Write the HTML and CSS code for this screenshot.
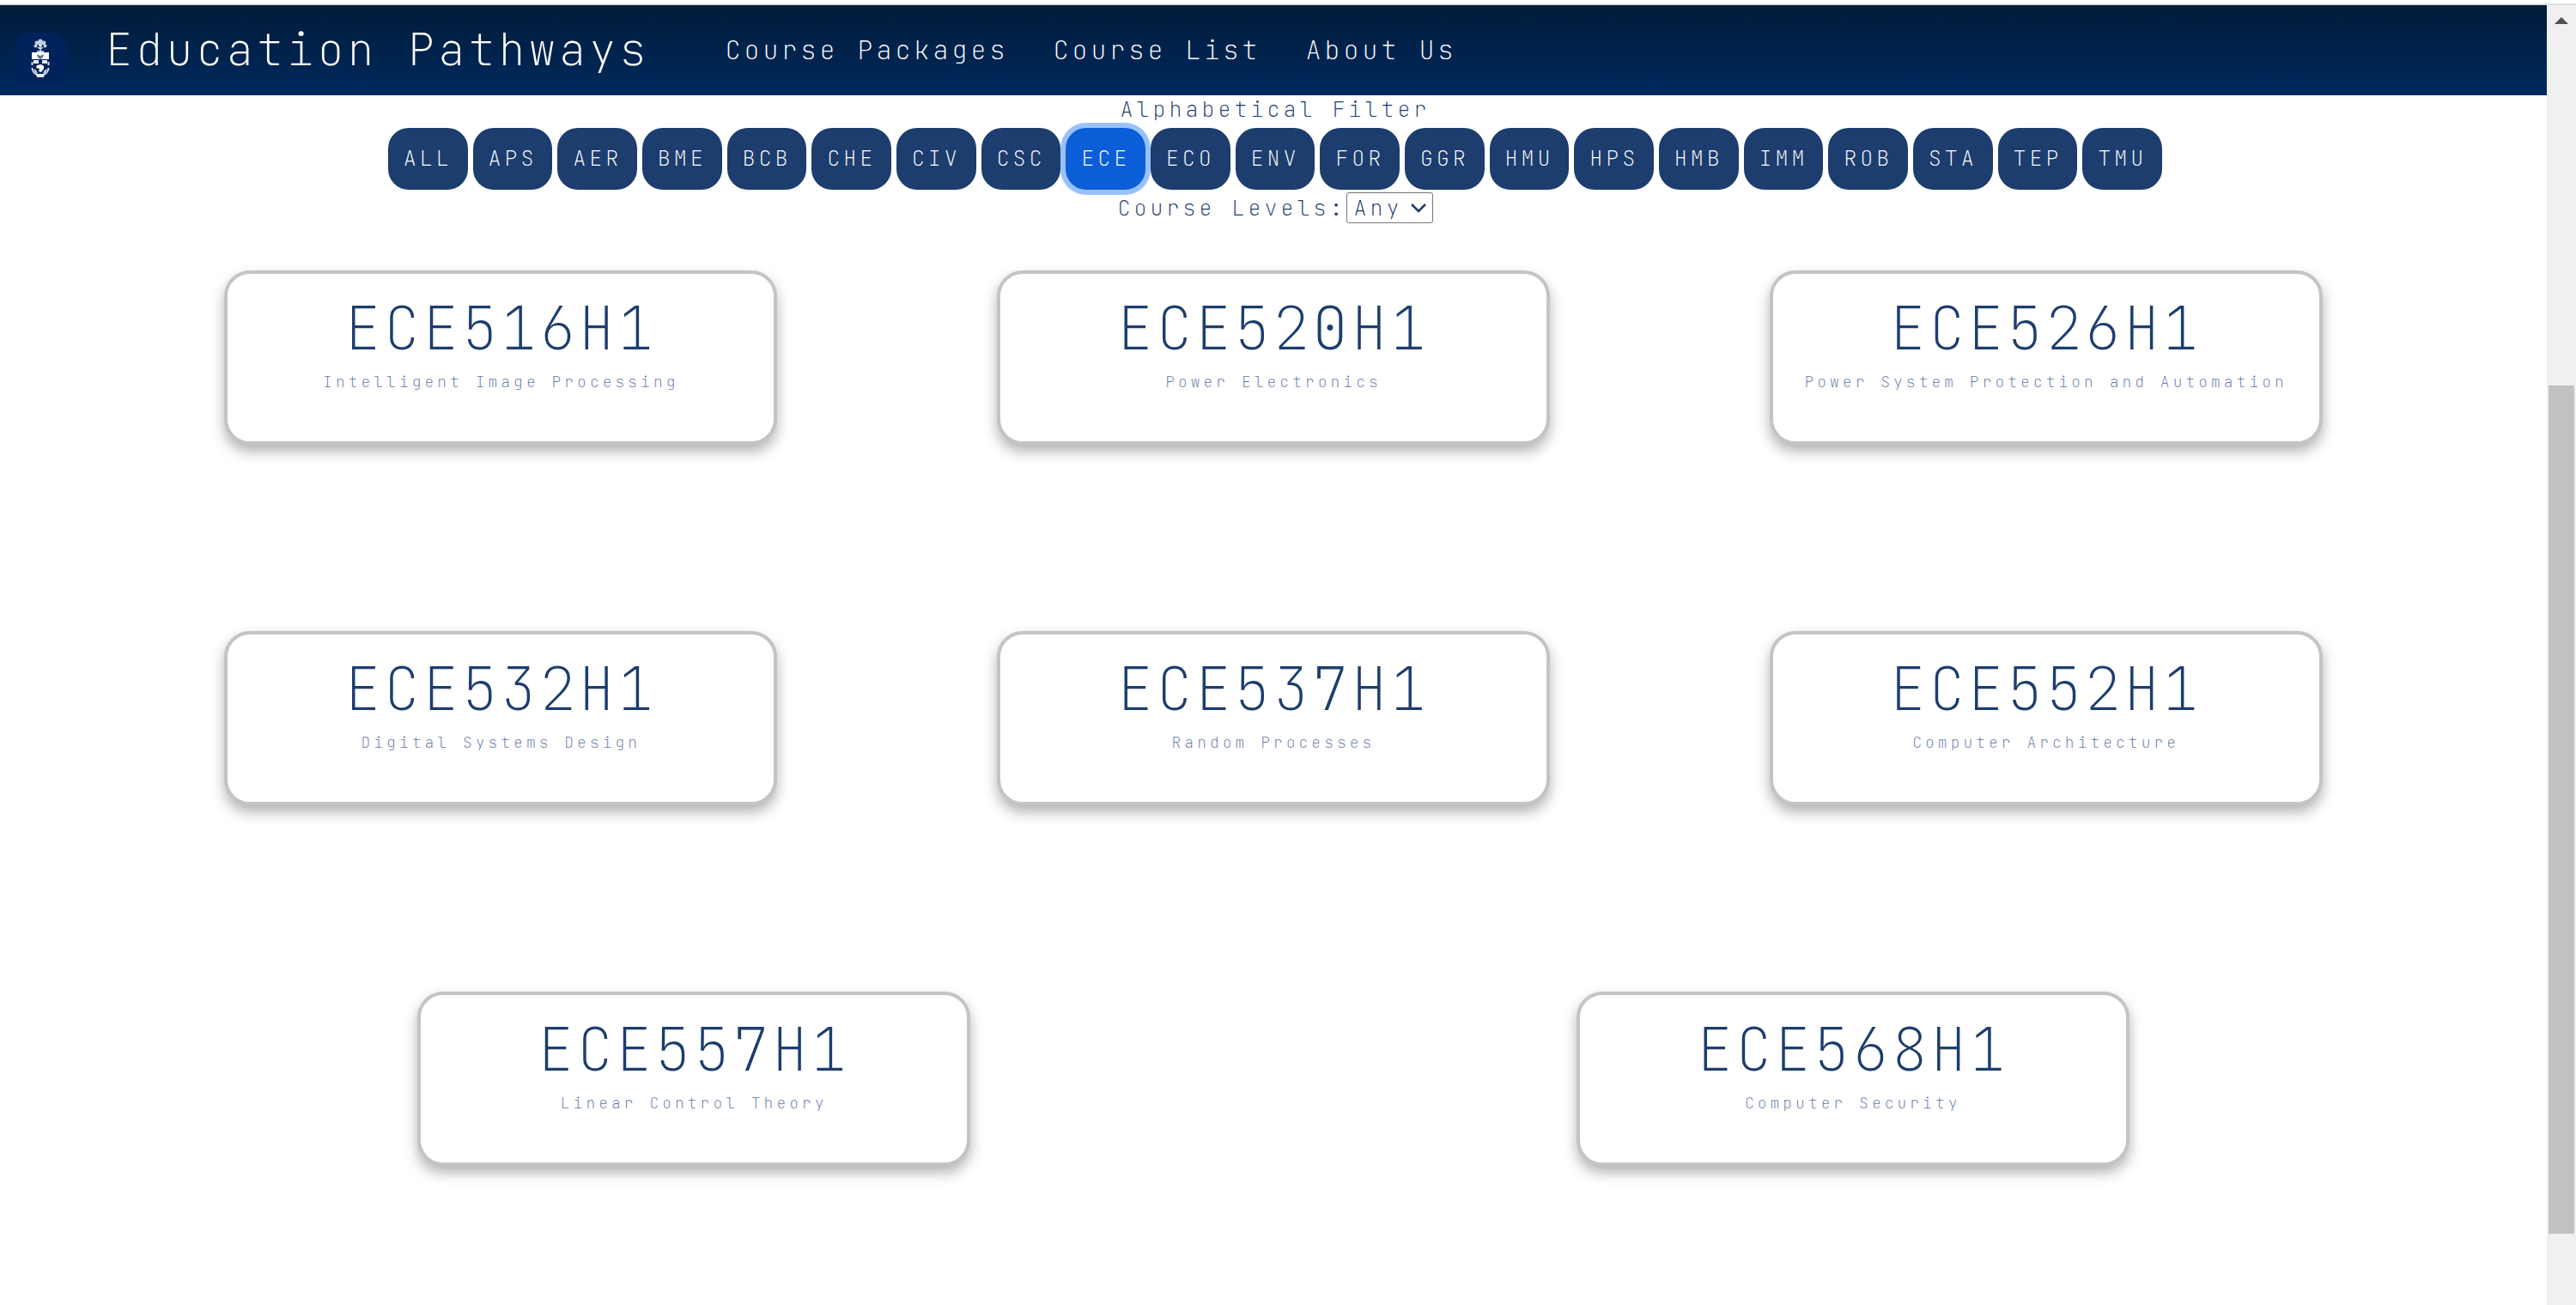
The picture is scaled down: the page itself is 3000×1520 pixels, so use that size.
FILE: index.html
```html
<!DOCTYPE html>
<html lang="en">
<head>
<meta charset="utf-8">
<title>Education Pathways</title>
<link rel="stylesheet" href="styles.css">
</head>
<body>
<div class="viewport">
  <div class="page">
    <header class="navbar">
      <svg class="logo" viewBox="0 0 60 60" aria-hidden="true">
        <rect width="60" height="60" rx="16" fill="#00235c"/>
        <g fill="#c3cfe2">
          <circle cx="30" cy="10" r="2.6"/><circle cx="26" cy="12" r="2.4"/><circle cx="34" cy="12" r="2.4"/>
          <circle cx="24.500" cy="15.500" r="2"/><circle cx="35.500" cy="15.500" r="2"/><circle cx="30" cy="14" r="2.400"/>
        </g>
        <path d="M30 23V14M26 22h8M27 17l3 2 3-2" fill="none" stroke="#e6ecf5" stroke-width="1.500"/>
        <path d="M20 23h20v8H20z" fill="#fff"/>
        <path d="M26 25l4 2 4-2-1 4-3 2-3-2z" fill="#5c74a0"/>
        <path d="M22 32h6v4h-6zM32 32h6v4h-6z" fill="#e6ecf5"/>
        <path d="M26 38l5-1 3 2v3l-3 4-3-1 1-3-4-1z" fill="#fff"/>
        <path d="M20.500 34v4M39.500 34v4M20.500 41c0 4 3 7 6 8M39.500 41c0 4-3 7-6 8M23 43l3 4M37 43l-3 4" fill="none" stroke="#d5deeb" stroke-width="2"/>
        <path d="M25 48h10l-1 4h-8z" fill="#e6ecf5"/>
      </svg>
      <a class="brand" href="#">Education Pathways</a>
      <nav class="links">
        <a href="#">Course Packages</a>
        <a href="#">Course List</a>
        <a href="#">About Us</a>
      </nav>
    </header>
    <main>
      <section class="filters">
        <p class="caption">Alphabetical Filter</p>
        <div class="codes">
          <button type="button">ALL</button><button type="button">APS</button><button type="button">AER</button><button type="button">BME</button><button type="button">BCB</button><button type="button">CHE</button><button type="button">CIV</button><button type="button">CSC</button><button type="button" class="active">ECE</button><button type="button">ECO</button><button type="button">ENV</button><button type="button">FOR</button><button type="button">GGR</button><button type="button">HMU</button><button type="button">HPS</button><button type="button">HMB</button><button type="button">IMM</button><button type="button">ROB</button><button type="button">STA</button><button type="button">TEP</button><button type="button">TMU</button>
        </div>
        <div class="levels">
          <label for="level">Course Levels:</label>
          <span class="picker">
            <select id="level"><option>Any</option></select>
            <svg viewBox="0 0 18 12" aria-hidden="true"><path d="M1 2l8 8 8-8" fill="none" stroke="#1c3d6e" stroke-width="2.500"/></svg>
          </span>
        </div>
      </section>
      <section class="courses">
        <article class="card"><h2>ECE516H1</h2><p>Intelligent Image Processing</p></article>
        <article class="card"><h2>ECE520H1</h2><p>Power Electronics</p></article>
        <article class="card"><h2>ECE526H1</h2><p>Power System Protection and Automation</p></article>
        <article class="card"><h2>ECE532H1</h2><p>Digital Systems Design</p></article>
        <article class="card"><h2>ECE537H1</h2><p>Random Processes</p></article>
        <article class="card"><h2>ECE552H1</h2><p>Computer Architecture</p></article>
        <article class="card"><h2>ECE557H1</h2><p>Linear Control Theory</p></article>
        <article class="card"><h2>ECE568H1</h2><p>Computer Security</p></article>
      </section>
    </main>
  </div>
  <div class="scrollbar" aria-hidden="true">
    <svg class="arrow" viewBox="0 0 16 8"><path d="M8 0l8 8H0z" fill="#505050"/></svg>
    <div class="track"><div class="thumb"></div></div>
  </div>
</div>
</body>
</html>
```
FILE: styles.css
```css
* { box-sizing: border-box; }

body {
  margin: 0;
  padding-top: 4px;
  background: #fff;
  color: #1c3d6e;
  font-family: "JetBrains Mono", "Liberation Mono", monospace;
  font-weight: 100;
  font-size: 25px;
  line-height: 32px;
  letter-spacing: 4px;
}

h2, p { margin: 0; font-weight: inherit; }

.viewport {
  display: flex;
  min-height: calc(100vh - 4px);
  border-top: 2px solid #dfe1e1;
}

.page { flex: 1; }

.navbar {
  display: flex;
  align-items: center;
  height: 105px;
  padding: 0 17px 2px;
  background: linear-gradient(#001c38, #00295e);
}

.navbar a { color: #fff; text-decoration: none; }

.logo { width: 60px; height: 60px; margin-top: 20px; }

.brand { margin-left: 46px; font-size: 52px; line-height: 64px; }

.links { display: flex; gap: 52px; margin-left: 88px; font-size: 30px; }

.filters {
  display: flex;
  flex-direction: column;
  align-items: center;
  padding-left: 4px;
}

.caption { padding-bottom: 6px; }

.codes {
  display: grid;
  grid-template-columns: repeat(21, 1fr);
  gap: 6px;
  width: 70%;
  max-width: 2066px;
}

.codes button {
  height: 72px;
  padding: 0 0 2px;
  border: 0;
  border-radius: 24px;
  background: #1c3d6e;
  color: #fff;
  font: inherit;
  letter-spacing: inherit;
}

.codes .active { background: #0b5ed7; box-shadow: 0 0 0 6px #98c1fe; }

.levels { display: flex; align-items: center; padding-top: 3px; }

.picker { display: flex; align-items: center; position: relative; }

.picker select {
  appearance: none;
  width: 101px;
  height: 36px;
  padding: 0 8px;
  border: 1px solid #767676;
  border-radius: 3px;
  background: #fff;
  color: inherit;
  font: inherit;
  letter-spacing: inherit;
}

.picker svg {
  position: absolute;
  right: 8px;
  width: 18px;
  height: 12px;
  pointer-events: none;
}

.courses {
  display: flex;
  flex-wrap: wrap;
  justify-content: space-around;
  row-gap: 217px;
  width: 91%;
  margin: 0 auto;
  padding-top: 55px;
}

.card {
  width: 644px;
  height: 203px;
  margin: 0 64px;
  padding-top: 24px;
  border: 4px solid #c4c4c4;
  border-radius: 30px;
  background: #fff;
  box-shadow: 0 8px 16px rgba(0, 0, 0, .3);
  text-align: center;
}

.card h2 { font-size: 69px; line-height: 80px; }

.card p { color: #5f769f; font-size: 18px; line-height: 44px; }

.scrollbar {
  display: flex;
  flex-direction: column;
  align-items: center;
  width: 34px;
  padding: 14px 0 34px;
  background: #f0f0f0;
}

.arrow { width: 16px; height: 8px; }

.track { flex: 1; width: 30px; padding-top: 421px; }

.thumb { height: 988px; background: #c1c1c1; }
```
